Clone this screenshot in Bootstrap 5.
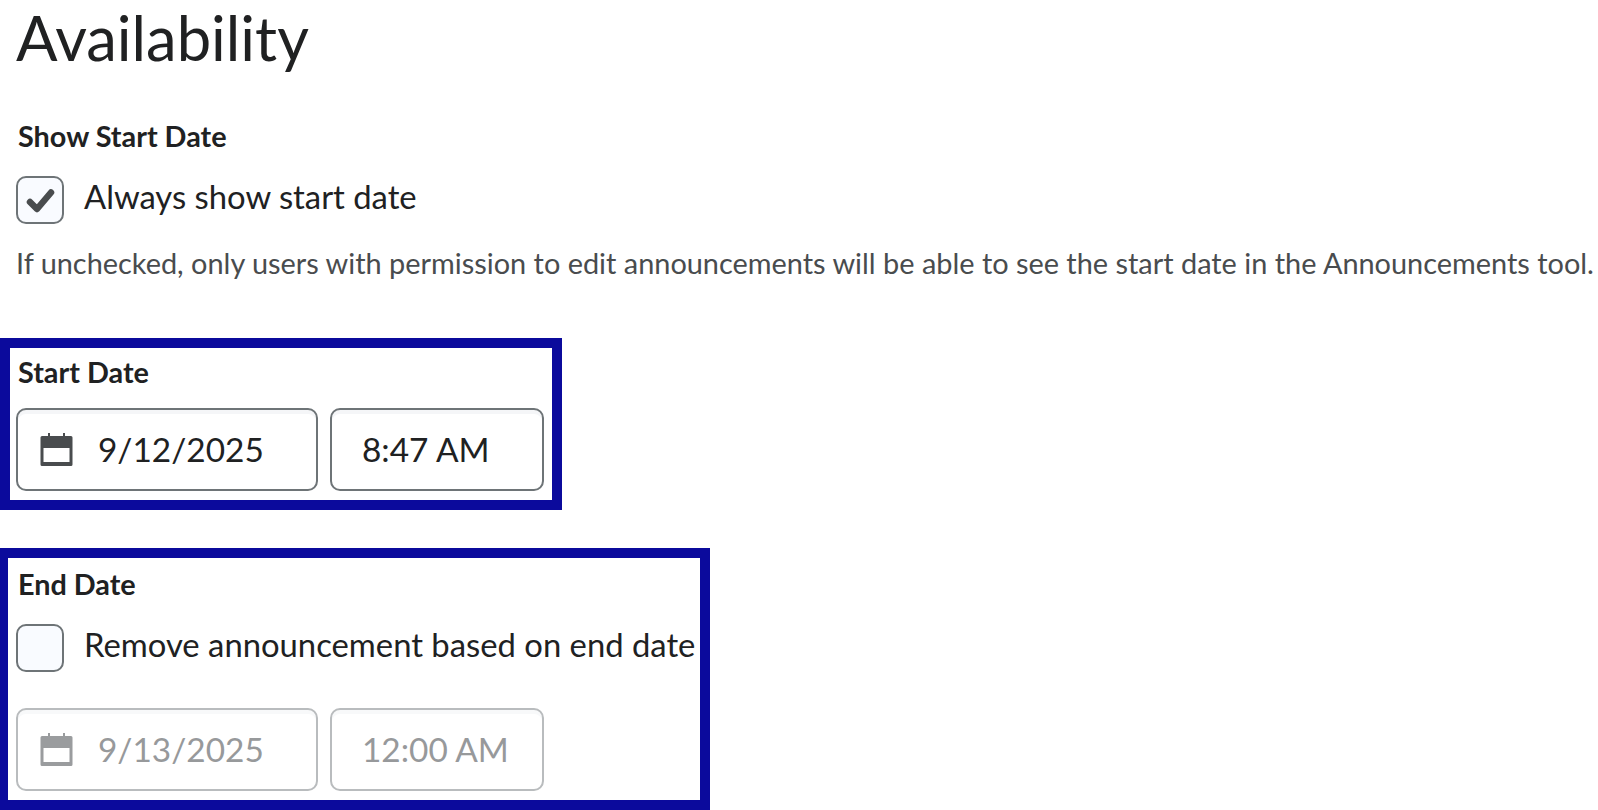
<!DOCTYPE html>
<html lang="en"><head><meta charset="utf-8"><title>Availability</title>
<link href="https://cdn.jsdelivr.net/npm/bootstrap@5.3.0/dist/css/bootstrap.min.css" rel="stylesheet">
<style>
html,body{height:810px;overflow:hidden;background:#fff}
body{font-family:Lato,"Liberation Sans",sans-serif;color:#202122;padding:0 0 0 16px}
.ttl{font-size:61.5px;font-weight:400;line-height:74px;margin:0;height:74px}
.lbl{font-size:28.8px;font-weight:700;line-height:34px;margin:0 0 0 2px}
.chk{width:48px;height:48px;border:2px solid #6e7477;border-radius:10px;background:#f9fbff;flex:none;display:flex;align-items:center;justify-content:center}
.chktxt{font-size:32.8px;line-height:40px;margin:-6px 0 0 20px;white-space:nowrap}
.hint{font-size:28.9px;line-height:36px;color:#494c4e;white-space:nowrap;margin:21px 0 0}
.box{border:10px solid #0b0a9c;margin-left:-16px;padding:0 0 0 6px}
.box1{margin-top:57px;height:172px;width:562px}
.box2{margin-top:38px;height:262px;width:710px;border-left-width:8px;padding-left:8px}
.fld{height:83px;border:2px solid #6e7477;border-radius:10px;display:flex;align-items:center;font-size:33.4px;background:#fff;box-shadow:inset 0 4px 0 #f5f6f8}
.dt{width:302px;padding-left:22px}
.tm{width:214px;padding-left:30px;margin-left:4px}
.dt svg{margin-right:25px;flex:none}
.off .fld{border-color:#b9bcbe;color:#97999b;box-shadow:inset 0 4px 0 #f8f9fa}
</style></head><body>
<h1 class="ttl">Availability</h1>
<div class="lbl" style="margin-top:45px">Show Start Date</div>
<div class="d-flex align-items-center" style="margin-top:23px">
<div class="chk"><svg width="29" height="25" viewBox="0 0 29 25"><path d="M4 14L11 21 25 4.500" fill="none" stroke="#494c4e" stroke-width="6.500" stroke-linecap="round" stroke-linejoin="round"/></svg></div>
<div class="chktxt">Always show start date</div></div>
<div class="hint">If unchecked, only users with permission to edit announcements will be able to see the start date in the Announcements tool.</div>
<div class="box box1">
<div class="lbl" style="margin-top:7px">Start Date</div>
<div class="d-flex gap-2" style="margin-top:19px">
<div class="fld dt"><svg width="33" height="33" viewBox="0 0 33 33"><path fill="#494c4e" fill-rule="evenodd" d="M8 0h2v3h13V0h2v3h6a1.500 1.500 0 0 1 1.500 1.500v27a1.500 1.500 0 0 1-1.500 1.500H2a1.500 1.500 0 0 1-1.500-1.500v-27A1.500 1.500 0 0 1 2 3h6zM3.500 15v14h26V15z"/></svg>9/12/2025</div>
<div class="fld tm">8:47 AM</div></div></div>
<div class="box box2">
<div class="lbl" style="margin-top:9px">End Date</div>
<div class="d-flex align-items-center" style="margin-top:23px"><div class="chk"></div><div class="chktxt">Remove announcement based on end date</div></div>
<div class="d-flex gap-2 off" style="margin-top:36px">
<div class="fld dt"><svg width="33" height="33" viewBox="0 0 33 33"><path fill="#9a9c9e" fill-rule="evenodd" d="M8 0h2v3h13V0h2v3h6a1.500 1.500 0 0 1 1.500 1.500v27a1.500 1.500 0 0 1-1.500 1.500H2a1.500 1.500 0 0 1-1.500-1.500v-27A1.500 1.500 0 0 1 2 3h6zM3.500 15v14h26V15z"/></svg>9/13/2025</div>
<div class="fld tm">12:00 AM</div></div></div>
<script src="https://cdn.jsdelivr.net/npm/bootstrap@5.3.0/dist/js/bootstrap.bundle.min.js"></script>
</body></html>
